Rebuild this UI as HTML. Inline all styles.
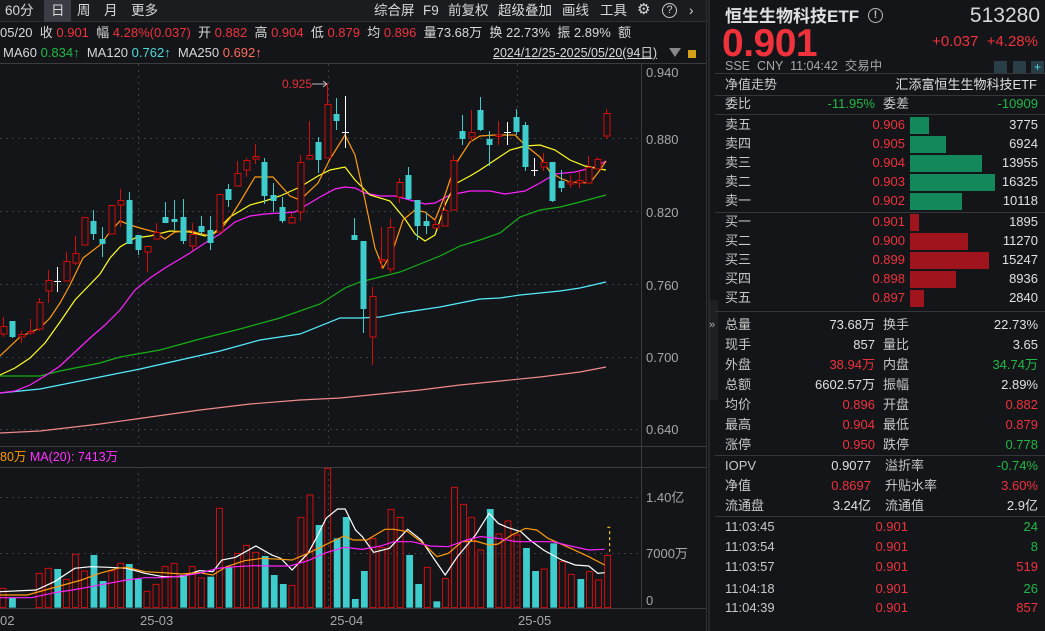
<!DOCTYPE html>
<html><head><meta charset="utf-8">
<style>
*{margin:0;padding:0;box-sizing:border-box}
body{width:1045px;height:631px;background:#131519;overflow:hidden;font-family:"Liberation Sans","Noto Sans CJK SC",sans-serif;color:#d0d0d0;position:relative;font-size:13px}
.a{position:absolute;white-space:nowrap;line-height:18px}
.r{color:#f0323c}.g{color:#22b845}.c{color:#4fd8d8}.gy{color:#a8a8a8}.w{color:#e0e0e0}
.tb{position:absolute;top:0;left:0;width:708px;height:22px;background:#1a1c20;border-bottom:1px solid #2c2e33}
.tb span{position:absolute;top:2px;font-size:13.5px;line-height:18px;color:#d8d8d8}
.rp{position:absolute;left:708px;top:0;width:337px;height:631px;background:#131519;border-left:2px solid #26282c}
.ln{position:absolute;left:715px;width:330px;height:1px;background:#34363b}
.row{position:absolute;left:725px;width:313px;height:18px;font-size:13px;line-height:18px}
.row span{position:absolute;top:0;line-height:18px;white-space:nowrap}
.row .l{left:0;color:#c8c8c8}
.row .v{right:163px;text-align:right}
.row .l2{left:158px;color:#c8c8c8}
.row .v2{right:0;text-align:right}
</style></head><body>
<div class="tb">
<span style="left:5px">60分</span>
<div class="a" style="left:44px;top:0;width:27px;height:22px;background:#3a3d44"></div>
<span style="left:51px">日</span><span style="left:77px">周</span><span style="left:104px">月</span><span style="left:131px">更多</span>
<span style="left:374px">综合屏</span><span style="left:423px">F9</span><span style="left:448px">前复权</span><span style="left:498px">超级叠加</span><span style="left:562px">画线</span><span style="left:600px">工具</span>
<span style="left:637px;font-size:15px;top:1px">⚙</span>
<div class="a" style="left:662px;top:3px;width:15px;height:15px;border:1.5px solid #ccc;border-radius:50%;font-size:11px;text-align:center;line-height:12px;color:#ccc">?</div>
<span style="left:689px">›</span>
</div>
<div class="a" style="left:0;top:24px;font-size:13px;color:#d8d8d8">05/20 &nbsp;收 <span class="r">0.901</span> &nbsp;幅 <span class="r">4.28%(0.037)</span> &nbsp;开 <span class="r">0.882</span> &nbsp;高 <span class="r">0.904</span> &nbsp;低 <span class="r">0.879</span> &nbsp;均 <span class="r">0.896</span> &nbsp;量73.68万 &nbsp;换 22.73% &nbsp;振 2.89% &nbsp;额</div>
<div class="a" style="left:3px;top:44px;font-size:13px;color:#d8d8d8">MA60 <span class="g">0.834↑</span> &nbsp;MA120 <span class="c">0.762↑</span> &nbsp;MA250 <span style="color:#ff6a5a">0.692↑</span></div>
<div class="a" style="left:493px;top:44px;font-size:12.5px;color:#d8d8d8;text-decoration:underline">2024/12/25-2025/05/20(94日)</div>
<div class="a" style="left:669px;top:48px;width:0;height:0;border-left:6px solid transparent;border-right:6px solid transparent;border-top:9px solid #888"></div>
<div class="a" style="left:688px;top:50px;width:8px;height:8px;background:#d4a017"></div>

<svg class="a" style="left:0;top:0;line-height:normal" width="708" height="631">
<line x1="0" y1="63.5" x2="706" y2="63.5" stroke="#3a3c40"/>
<line x1="641.5" y1="64" x2="641.5" y2="608" stroke="#3a3c40"/>
<line x1="706.5" y1="0" x2="706.5" y2="631" stroke="#2c2e33"/>
<g stroke="#3a3d42" stroke-dasharray="2,4">
<line x1="0" y1="138.5" x2="641" y2="138.5"/><line x1="0" y1="211.5" x2="641" y2="211.5"/><line x1="0" y1="284.5" x2="641" y2="284.5"/><line x1="0" y1="357.5" x2="641" y2="357.5"/><line x1="0" y1="429.5" x2="641" y2="429.5"/>
<line x1="138.5" y1="64" x2="138.5" y2="445"/><line x1="328.5" y1="64" x2="328.5" y2="445"/><line x1="517.5" y1="64" x2="517.5" y2="445"/>
<line x1="0" y1="497.5" x2="641" y2="497.5"/><line x1="0" y1="553.5" x2="641" y2="553.5"/>
<line x1="138.5" y1="467" x2="138.5" y2="608"/><line x1="328.5" y1="467" x2="328.5" y2="608"/><line x1="517.5" y1="467" x2="517.5" y2="608"/>
</g>
<g fill="#a8a8a8" font-size="13" font-family="Liberation Sans, sans-serif">
<text x="646" y="77">0.940</text><text x="646" y="144">0.880</text><text x="646" y="217">0.820</text><text x="646" y="290">0.760</text><text x="646" y="362">0.700</text><text x="646" y="434">0.640</text>
<text x="646" y="502" font-family="Liberation Sans, Noto Sans CJK SC, sans-serif">1.40亿</text><text x="646" y="558" font-family="Liberation Sans, Noto Sans CJK SC, sans-serif">7000万</text><text x="646" y="605">0</text>
<text x="0" y="625">02</text><text x="140" y="625">25-03</text><text x="330" y="625">25-04</text><text x="518" y="625">25-05</text>
</g>
<line x1="0" y1="446.5" x2="706" y2="446.5" stroke="#3a3c40"/>
<line x1="0" y1="467.5" x2="706" y2="467.5" stroke="#3a3c40"/>
<line x1="0" y1="608.5" x2="706" y2="608.5" stroke="#3a3c40"/>
<text x="0" y="461" font-size="12.5" fill="#ff9a00" font-family="Liberation Sans, Noto Sans CJK SC, sans-serif">80万 <tspan fill="#ff33ff">MA(20): 7413万</tspan></text>
<text x="282" y="88" font-size="12" fill="#e0303a" font-family="Liberation Sans, sans-serif">0.925</text>
<path d="M312 84H327M323 81L327 84L323 87" stroke="#bbb" fill="none"/>
<g fill="none" stroke-width="1.2">
<polyline stroke="#f28a8a" points="0,433 40,431 100,424 150,417 200,410 250,404 300,400 340,398 380,394 420,390 460,385 500,381 540,377 580,372 606,367"/>
<polyline stroke="#55eeff" points="0,393 40,389 60,385 100,377 140,369 180,360 220,351 260,340 300,334 340,318 360,318 380,317 400,313 420,310 440,307 460,303 480,299 500,298 520,295 540,293 560,291 580,288 606,282"/>
<polyline stroke="#17b017" points="0,376 40,376 60,371 100,363 120,357 160,350 200,339 240,329 280,318 320,304 345,288 360,282 380,277 400,272 420,264 440,256 460,246 480,240 500,233 520,217 540,210 560,207 580,202 606,195"/>
<polyline stroke="#ff22ff" points="0,393 15,391 30,385 45,376 60,366 75,352 90,338 105,325 120,310 135,290 150,278 165,268 180,259 190,253 205,243 220,234 235,222 250,216 265,214 280,213 295,212 305,206 320,197 335,189 345,187 355,188 365,193 380,196 395,196 410,200 425,204 435,203 450,195 470,191 490,191 505,194 525,191 540,183 555,174 575,172 595,167 606,161"/>
<polyline stroke="#ffff22" points="0,375 15,368 30,358 45,343 60,322 75,300 100,274 110,258 120,247 135,238 150,236 170,231 190,232 205,236 215,232 230,217 250,205 265,201 280,196 300,187 318,176 330,170 345,167 355,180 370,195 390,201 405,219 415,234 425,241 435,235 445,205 455,184 470,176 480,170 495,160 510,150 525,146 540,145 555,150 570,160 585,166 600,169 606,170"/>
<polyline stroke="#ff9a10" points="0,356 20,337 40,328 50,318 60,303 70,285 83,258 100,245 110,232 120,221 130,225 140,228 155,232 165,239 175,232 190,231 210,236 220,230 230,218 240,202 255,177 273,177 290,196 300,200 318,183 330,159 345,135 355,155 365,200 375,248 383,268 393,250 403,220 415,210 425,212 435,220 445,195 455,165 470,142 480,136 495,135 515,135 525,145 540,157 550,172 560,178 570,182 590,183 600,170 606,161"/>
</g>
<path stroke="#d40c0c" fill="none" d="M3.5 317V326M3.5 334V337M21.5 331V334M21.5 337V343M30.5 319V331M30.5 333V335M39.5 298V302M39.5 329V331M48.5 270V280M48.5 291V303M66.5 252V261M75.5 236V253M75.5 263V265M120.5 189V200M120.5 205V227M147.5 252V272M156.5 223V232M192.5 223V234M192.5 246V250M237.5 161V173M246.5 158V160M246.5 170V177M255.5 144V156M255.5 159V164M291.5 213V217M300.5 155V162M300.5 212V221M309.5 121V155M327.5 83V104M372.5 287V296M372.5 337V365M381.5 227V259M381.5 261V269M390.5 218V227M390.5 269V273M399.5 178V182M399.5 197V203M435.5 219V224M444.5 199V210M453.5 155V160M471.5 110V132M471.5 137V142M498.5 121V135M498.5 136V145M543.5 153V162M543.5 167V171M570.5 175V182M570.5 184V188M579.5 171V180M579.5 183V188M588.5 156V167M597.5 157V159M606.5 109V113M606.5 136V139"/>
<g stroke="#d40c0c" fill="#131519">
<rect x="1" y="326.5" width="6" height="7.5"/><rect x="19" y="334.5" width="6" height="2.5"/><rect x="28" y="331.5" width="6" height="1.5"/><rect x="37" y="302.5" width="6" height="26.5"/><rect x="46" y="280.5" width="6" height="10.5"/><rect x="64" y="261.5" width="6" height="19.5"/><rect x="73" y="253.5" width="6" height="9.5"/><rect x="82" y="217.5" width="6" height="27.5"/><rect x="109" y="205.5" width="6" height="28.5"/><rect x="118" y="200.5" width="6" height="4.5"/><rect x="145" y="246.5" width="6" height="5.5"/><rect x="154" y="232.5" width="6" height="6.5"/><rect x="190" y="234.5" width="6" height="11.5"/><rect x="217" y="194.5" width="6" height="37.5"/><rect x="235" y="173.5" width="6" height="12.5"/><rect x="244" y="160.5" width="6" height="9.5"/><rect x="253" y="156.5" width="6" height="2.5"/><rect x="289" y="217.5" width="6" height="5.5"/><rect x="298" y="162.5" width="6" height="49.5"/><rect x="307" y="155.5" width="6" height="3.5"/><rect x="325" y="104.5" width="6" height="53.5"/><rect x="370" y="296.5" width="6" height="40.5"/><rect x="379" y="259.5" width="6" height="1.5"/><rect x="388" y="227.5" width="6" height="41.5"/><rect x="397" y="182.5" width="6" height="14.5"/><rect x="433" y="224.5" width="6" height="3.5"/><rect x="442" y="210.5" width="6" height="15.5"/><rect x="451" y="160.5" width="6" height="49.5"/><rect x="469" y="132.5" width="6" height="4.5"/><rect x="496" y="135" width="6" height="1.5"/><rect x="541" y="162.5" width="6" height="4.5"/><rect x="568" y="182" width="6" height="2"/><rect x="577" y="180.5" width="6" height="2.5"/><rect x="586" y="167.5" width="6" height="15.5"/><rect x="595" y="159.5" width="6" height="9.5"/><rect x="604" y="113.5" width="6" height="22.5"/>
</g>
<path stroke="#3fcccc" fill="none" d="M12.5 321V338M93.5 210V240M102.5 227V257M129.5 192V244M138.5 235V255M165.5 202V223M174.5 200V230M183.5 199V244M201.5 216V235M210.5 216V250M228.5 184V207M264.5 158V204M273.5 183V212M282.5 197V223M318.5 137V173M336.5 98V130M354.5 218V240M363.5 241V333M408.5 167V200M417.5 200V240M426.5 213V234M462.5 115V145M480.5 97V131M489.5 131V166M516.5 109V135M525.5 122V171M552.5 162V202M561.5 170V192"/>
<g fill="#3fcccc">
<rect x="9.5" y="321" width="6" height="16"/><rect x="90.5" y="221" width="6" height="13"/><rect x="99.5" y="239" width="6" height="5"/><rect x="126.5" y="200" width="6" height="44"/><rect x="135.5" y="235" width="6" height="15"/><rect x="162.5" y="217" width="6" height="6"/><rect x="171.5" y="219" width="6" height="3"/><rect x="180.5" y="217" width="6" height="24"/><rect x="198.5" y="226" width="6" height="6"/><rect x="207.5" y="230" width="6" height="13"/><rect x="225.5" y="189" width="6" height="11"/><rect x="261.5" y="162" width="6" height="34"/><rect x="270.5" y="195" width="6" height="6"/><rect x="279.5" y="207" width="6" height="14"/><rect x="315.5" y="142" width="6" height="18"/><rect x="333.5" y="114" width="6" height="7"/><rect x="351.5" y="235" width="6" height="5"/><rect x="360.5" y="241" width="6" height="68"/><rect x="405.5" y="175" width="6" height="24"/><rect x="414.5" y="200" width="6" height="26"/><rect x="423.5" y="221" width="6" height="5"/><rect x="459.5" y="131" width="6" height="8"/><rect x="477.5" y="110" width="6" height="20"/><rect x="486.5" y="139" width="6" height="6"/><rect x="513.5" y="117" width="6" height="15"/><rect x="522.5" y="125" width="6" height="42"/><rect x="549.5" y="162" width="6" height="39"/><rect x="558.5" y="181" width="6" height="7"/>
</g>
<path stroke="#fff" fill="none" d="M57.5 267V292M54 281.5H61M345.5 96V148M342 132.5H349M507.5 122V145M504 132.5H511M534.5 158V176M531 170.5H538"/>
<g transform="translate(0,440) scale(0.4529,0.33333)">
<g fill="#3fcccc">
<rect x="20" y="473" width="15" height="30"/><rect x="120" y="387" width="15" height="116"/><rect x="200" y="345" width="15" height="158"/><rect x="220" y="423" width="15" height="80"/><rect x="278" y="372" width="15" height="131"/><rect x="298" y="417" width="15" height="86"/><rect x="398" y="405" width="15" height="98"/><rect x="458" y="410" width="15" height="93"/><rect x="498" y="380" width="15" height="123"/><rect x="578" y="348" width="15" height="155"/><rect x="598" y="405" width="15" height="98"/><rect x="618" y="432" width="15" height="71"/><rect x="697" y="255" width="15" height="248"/><rect x="737" y="295" width="15" height="208"/><rect x="757" y="231" width="15" height="272"/><rect x="777" y="477" width="15" height="26"/><rect x="797" y="393" width="15" height="110"/><rect x="897" y="345" width="15" height="158"/><rect x="917" y="432" width="15" height="71"/><rect x="957" y="484" width="15" height="19"/><rect x="1075" y="207" width="15" height="296"/><rect x="1155" y="324" width="15" height="179"/><rect x="1175" y="393" width="15" height="110"/><rect x="1215" y="310" width="15" height="193"/><rect x="1275" y="417" width="15" height="86"/>
</g>
<g fill="none" stroke="#d40c0c">
<rect vector-effect="non-scaling-stroke" x="0" y="445" width="13" height="58"/><rect vector-effect="non-scaling-stroke" x="80" y="400" width="13" height="103"/><rect vector-effect="non-scaling-stroke" x="100" y="385" width="13" height="118"/><rect vector-effect="non-scaling-stroke" x="140" y="418" width="13" height="85"/><rect vector-effect="non-scaling-stroke" x="160" y="343" width="13" height="160"/><rect vector-effect="non-scaling-stroke" x="180" y="393" width="13" height="110"/><rect vector-effect="non-scaling-stroke" x="240" y="393" width="13" height="110"/><rect vector-effect="non-scaling-stroke" x="260" y="370" width="13" height="133"/><rect vector-effect="non-scaling-stroke" x="318" y="454" width="13" height="49"/><rect vector-effect="non-scaling-stroke" x="338" y="433" width="13" height="70"/><rect vector-effect="non-scaling-stroke" x="358" y="380" width="13" height="123"/><rect vector-effect="non-scaling-stroke" x="378" y="370" width="13" height="133"/><rect vector-effect="non-scaling-stroke" x="418" y="380" width="13" height="123"/><rect vector-effect="non-scaling-stroke" x="438" y="414" width="13" height="89"/><rect vector-effect="non-scaling-stroke" x="478" y="205" width="13" height="298"/><rect vector-effect="non-scaling-stroke" x="518" y="340" width="13" height="163"/><rect vector-effect="non-scaling-stroke" x="538" y="316" width="13" height="187"/><rect vector-effect="non-scaling-stroke" x="558" y="337" width="13" height="166"/><rect vector-effect="non-scaling-stroke" x="638" y="436" width="13" height="67"/><rect vector-effect="non-scaling-stroke" x="658" y="232" width="13" height="271"/><rect vector-effect="non-scaling-stroke" x="678" y="165" width="13" height="338"/><rect vector-effect="non-scaling-stroke" x="717" y="85" width="13" height="418"/><rect vector-effect="non-scaling-stroke" x="817" y="296" width="13" height="207"/><rect vector-effect="non-scaling-stroke" x="837" y="323" width="13" height="180"/><rect vector-effect="non-scaling-stroke" x="857" y="208" width="13" height="295"/><rect vector-effect="non-scaling-stroke" x="877" y="232" width="13" height="271"/><rect vector-effect="non-scaling-stroke" x="937" y="382" width="13" height="121"/><rect vector-effect="non-scaling-stroke" x="977" y="416" width="13" height="87"/><rect vector-effect="non-scaling-stroke" x="997" y="142" width="13" height="361"/><rect vector-effect="non-scaling-stroke" x="1017" y="193" width="13" height="310"/><rect vector-effect="non-scaling-stroke" x="1035" y="232" width="13" height="271"/><rect vector-effect="non-scaling-stroke" x="1055" y="330" width="13" height="173"/><rect vector-effect="non-scaling-stroke" x="1095" y="282" width="13" height="221"/><rect vector-effect="non-scaling-stroke" x="1115" y="243" width="13" height="260"/><rect vector-effect="non-scaling-stroke" x="1135" y="285" width="13" height="218"/><rect vector-effect="non-scaling-stroke" x="1195" y="387" width="13" height="116"/><rect vector-effect="non-scaling-stroke" x="1235" y="365" width="13" height="138"/><rect vector-effect="non-scaling-stroke" x="1255" y="403" width="13" height="100"/><rect vector-effect="non-scaling-stroke" x="1295" y="395" width="13" height="108"/><rect vector-effect="non-scaling-stroke" x="1315" y="420" width="13" height="83"/><rect vector-effect="non-scaling-stroke" x="1335" y="346" width="13" height="157"/>
</g>
<g fill="none" stroke-width="1.2">
<polyline vector-effect="non-scaling-stroke" stroke="#fff" points="0,455 80,450 120,425 165,385 200,380 240,382 280,385 320,400 360,410 400,410 440,392 470,395 490,360 520,352 565,318 600,345 620,355 645,390 680,340 700,290 720,235 745,207 762,207 785,270 800,290 825,337 860,325 900,268 930,300 960,360 983,405 1010,350 1050,285 1080,220 1100,250 1120,262 1150,275 1170,300 1200,330 1240,360 1270,375 1300,378 1320,400 1335,398"/>
<polyline vector-effect="non-scaling-stroke" stroke="#ff9a10" points="0,465 60,465 100,450 140,435 180,420 220,400 260,385 280,382 320,395 360,398 400,402 440,398 470,405 500,380 540,362 580,355 620,358 645,360 680,340 710,320 740,300 760,288 780,300 810,300 850,268 870,268 900,275 930,305 965,350 990,340 1020,305 1050,303 1080,315 1100,312 1130,285 1160,265 1185,270 1210,295 1260,325 1300,350 1335,375"/>
<polyline vector-effect="non-scaling-stroke" stroke="#ff22ff" points="0,473 70,473 120,458 160,450 200,440 240,430 280,420 320,413 360,413 400,408 440,400 480,385 520,380 560,377 600,378 640,378 680,362 720,338 760,322 800,328 840,318 870,305 910,305 950,318 990,320 1030,300 1060,290 1100,295 1140,305 1180,305 1220,305 1260,318 1300,330 1335,328"/>
<path vector-effect="non-scaling-stroke" stroke="#f0c020" stroke-dasharray="3,3" d="M1341 262H1346V335"/>
</g>
</g>
</svg>

<div class="rp"></div>
<div class="a" style="left:710px;top:300px;width:8px;height:100px;background:#1e2024"></div>
<div class="a" style="left:709px;top:316px;font-size:11px;color:#aaa">»</div>
<div class="a w" style="left:725px;top:6px;font-size:17px;line-height:22px;font-weight:bold">恒生生物科技ETF</div>
<div class="a" style="left:868px;top:8px;width:15px;height:15px;border:1.5px solid #bbb;border-radius:50%;font-size:11px;text-align:center;line-height:12px;color:#bbb;font-weight:bold">!</div>
<div class="a" style="right:5px;top:4px;font-size:21px;line-height:24px;color:#d8d8d8">513280</div>
<div class="a r" style="left:722px;top:24px;font-size:39px;line-height:40px;font-weight:bold;letter-spacing:-0.5px">0.901</div>
<div class="a r" style="right:7px;top:33px;font-size:15px">+0.037 &nbsp;+4.28%</div>
<div class="a gy" style="left:725px;top:58px;font-size:12.5px;line-height:16px">SSE &nbsp;CNY &nbsp;11:04:42 &nbsp;交易中</div>
<div class="a" style="left:994px;top:61px;width:13px;height:12px;background:#2a3e48"></div>
<div class="a" style="left:1013px;top:61px;width:13px;height:12px;background:#2a3e48"></div>
<div class="a" style="left:1031px;top:61px;width:13px;height:12px;background:#2a3e48;color:#4fd8d8;font-size:12px;text-align:center;line-height:12px">+</div>
<div class="ln" style="top:73px"></div>
<div class="a" style="left:725px;top:76px;color:#c8c8c8">净值走势</div>
<div class="a w" style="right:8px;top:76px">汇添富恒生生物科技ETF</div>
<div class="ln" style="top:95px"></div>
<div class="row" style="top:95px"><span class="l">委比</span><span class="v g">-11.95%</span><span class="l2">委差</span><span class="v2 g">-10909</span></div>
<div class="ln" style="top:114px"></div>

<div class="a" style="left:910px;top:117px;width:19px;height:17px;background:#13885a"></div>
<div class="a" style="left:910px;top:136px;width:36px;height:17px;background:#13885a"></div>
<div class="a" style="left:910px;top:155px;width:72px;height:17px;background:#13885a"></div>
<div class="a" style="left:910px;top:174px;width:85px;height:17px;background:#13885a"></div>
<div class="a" style="left:910px;top:193px;width:52px;height:17px;background:#13885a"></div>
<div class="a" style="left:910px;top:214px;width:9px;height:17px;background:#a0151d"></div>
<div class="a" style="left:910px;top:233px;width:58px;height:17px;background:#a0151d"></div>
<div class="a" style="left:910px;top:252px;width:79px;height:17px;background:#a0151d"></div>
<div class="a" style="left:910px;top:271px;width:46px;height:17px;background:#a0151d"></div>
<div class="a" style="left:910px;top:290px;width:14px;height:17px;background:#a0151d"></div>
<div class="ln" style="top:212px"></div>

<div class="row" style="top:116px"><span class="l">卖五</span><span class="v r" style="right:133px">0.906</span><span class="v2 w">3775</span></div>
<div class="row" style="top:135px"><span class="l">卖四</span><span class="v r" style="right:133px">0.905</span><span class="v2 w">6924</span></div>
<div class="row" style="top:154px"><span class="l">卖三</span><span class="v r" style="right:133px">0.904</span><span class="v2 w">13955</span></div>
<div class="row" style="top:173px"><span class="l">卖二</span><span class="v r" style="right:133px">0.903</span><span class="v2 w">16325</span></div>
<div class="row" style="top:192px"><span class="l">卖一</span><span class="v r" style="right:133px">0.902</span><span class="v2 w">10118</span></div>
<div class="row" style="top:213px"><span class="l">买一</span><span class="v r" style="right:133px">0.901</span><span class="v2 w">1895</span></div>
<div class="row" style="top:232px"><span class="l">买二</span><span class="v r" style="right:133px">0.900</span><span class="v2 w">11270</span></div>
<div class="row" style="top:251px"><span class="l">买三</span><span class="v r" style="right:133px">0.899</span><span class="v2 w">15247</span></div>
<div class="row" style="top:270px"><span class="l">买四</span><span class="v r" style="right:133px">0.898</span><span class="v2 w">8936</span></div>
<div class="row" style="top:289px"><span class="l">买五</span><span class="v r" style="right:133px">0.897</span><span class="v2 w">2840</span></div>
<div class="ln" style="top:311px"></div>

<div class="row" style="top:316px"><span class="l">总量</span><span class="v w">73.68万</span><span class="l2">换手</span><span class="v2 w">22.73%</span></div>
<div class="row" style="top:336px"><span class="l">现手</span><span class="v w">857</span><span class="l2">量比</span><span class="v2 w">3.65</span></div>
<div class="row" style="top:356px"><span class="l">外盘</span><span class="v r">38.94万</span><span class="l2">内盘</span><span class="v2 g">34.74万</span></div>
<div class="row" style="top:376px"><span class="l">总额</span><span class="v w">6602.57万</span><span class="l2">振幅</span><span class="v2 w">2.89%</span></div>
<div class="row" style="top:396px"><span class="l">均价</span><span class="v r">0.896</span><span class="l2">开盘</span><span class="v2 r">0.882</span></div>
<div class="row" style="top:416px"><span class="l">最高</span><span class="v r">0.904</span><span class="l2">最低</span><span class="v2 r">0.879</span></div>
<div class="row" style="top:436px"><span class="l">涨停</span><span class="v r">0.950</span><span class="l2">跌停</span><span class="v2 g">0.778</span></div>
<div class="ln" style="top:455px"></div>
<div class="row" style="top:457px"><span class="l">IOPV</span><span class="v w" style="right:167px">0.9077</span><span class="l2" style="left:160px">溢折率</span><span class="v2 g">-0.74%</span></div>
<div class="row" style="top:477px"><span class="l">净值</span><span class="v r" style="right:167px">0.8697</span><span class="l2" style="left:160px">升贴水率</span><span class="v2 r">3.60%</span></div>
<div class="row" style="top:497px"><span class="l">流通盘</span><span class="v w" style="right:167px">3.24亿</span><span class="l2" style="left:160px">流通值</span><span class="v2 w">2.9亿</span></div>
<div class="ln" style="top:516px"></div>
<div class="row" style="top:518px"><span class="l w">11:03:45</span><span class="v r" style="right:130px">0.901</span><span class="v2 g">24</span></div>
<div class="row" style="top:538px"><span class="l w">11:03:54</span><span class="v r" style="right:130px">0.901</span><span class="v2 g">8</span></div>
<div class="row" style="top:558px"><span class="l w">11:03:57</span><span class="v r" style="right:130px">0.901</span><span class="v2 r">519</span></div>
<div class="row" style="top:580px"><span class="l w">11:04:18</span><span class="v r" style="right:130px">0.901</span><span class="v2 g">26</span></div>
<div class="row" style="top:599px"><span class="l w">11:04:39</span><span class="v r" style="right:130px">0.901</span><span class="v2 r">857</span></div>
</body></html>
